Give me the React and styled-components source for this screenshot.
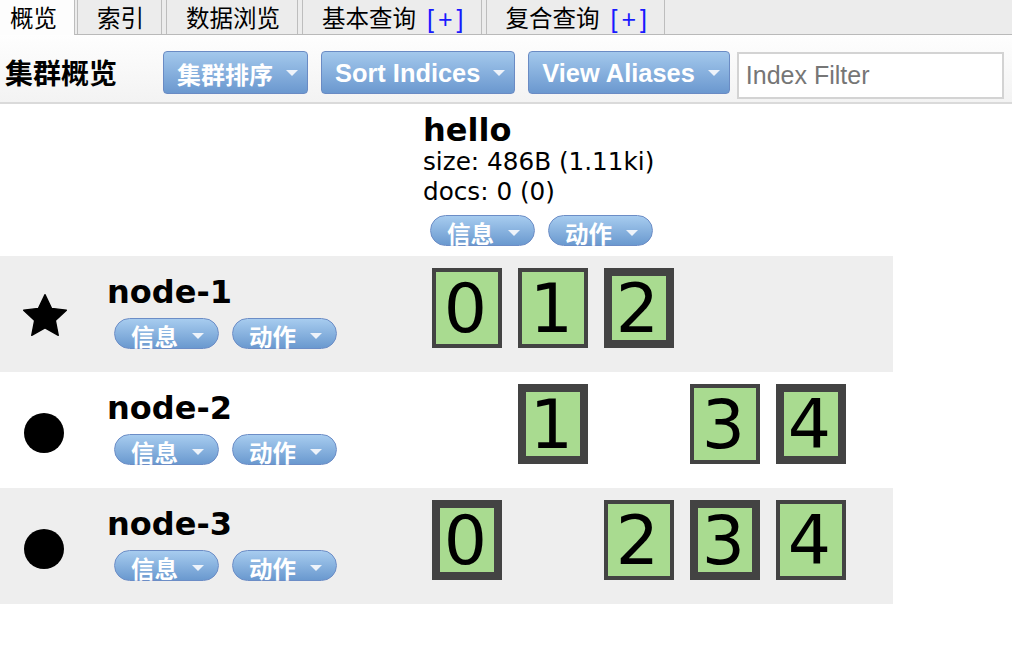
import React from "react";
import styled, { createGlobalStyle } from "styled-components";

const GlobalStyle = createGlobalStyle`
  html, body {
    margin: 0;
    padding: 0;
    background: #fff;
    color: #000;
    font-family: "DejaVu Sans", "Noto Sans CJK SC", sans-serif;
  }
  * { box-sizing: border-box; }
`;

const Page = styled.div`
  width: 1012px;
  min-height: 648px;
  background: #fff;
`;

/* ---------- tab bar ---------- */
const TabBar = styled.div`
  display: flex;
  height: 35px;
  background: #ececec;
  border-bottom: 1px solid #b9b9b9;
`;

const Tab = styled.div`
  display: flex;
  align-items: flex-start;
  padding: 4px 17px 0 ${(p) => (p.$first ? "10px" : "19px")};
  margin-right: ${(p) => (p.$first ? "2px" : "4px")};
  height: ${(p) => (p.$active ? "35px" : "34px")};
  line-height: 30px;
  font-size: 23.5px;
  font-family: "Liberation Sans", "Noto Sans CJK SC", sans-serif;
  background: ${(p) => (p.$active ? "#fdfdfd" : "#ececec")};
  border-left: ${(p) => (p.$first ? "none" : "1px solid #bdbdbd")};
  border-right: 1px solid #bdbdbd;
  white-space: nowrap;
`;

const Plus = styled.span`
  color: #1a1aff;
  margin-left: 11px;
  letter-spacing: 4px;
  margin-right: -4px;
  font-size: 25px;
`;

/* ---------- toolbar ---------- */
const Toolbar = styled.div`
  display: flex;
  align-items: flex-start;
  height: 69px;
  padding: 16px 0 0 5px;
  background: linear-gradient(#fefefe, #f3f3f3);
  border-bottom: 2px solid #dadada;
`;

const Title = styled.h1`
  margin: 5px 46px 0 0;
  font-size: 28px;
  line-height: 32px;
  font-weight: bold;
  font-family: "Noto Sans CJK SC", sans-serif;
`;

const ToolButtons = styled.div`
  display: flex;
  gap: 13px;
`;

const ToolButton = styled.button`
  display: flex;
  align-items: center;
  gap: 13px;
  height: 43px;
  padding: 1px 9px 0 13px;
  border: 1px solid #6a8bc4;
  border-radius: 4px;
  background: linear-gradient(#a3c8ec, #6b98cf);
  color: #fff;
  font-family: "Liberation Sans", "Noto Sans CJK SC", sans-serif;
  font-weight: bold;
  font-size: ${(p) => (p.$cjk ? "24px" : "25.4px")};
  cursor: pointer;
  white-space: nowrap;
`;

const Caret = styled.span`
  display: inline-block;
  width: 0;
  height: 0;
  border-left: 6px solid transparent;
  border-right: 6px solid transparent;
  border-top: 6px solid #eef3fa;
`;

const FilterInput = styled.input`
  margin: 1px 0 0 7px;
  width: 267px;
  height: 47px;
  border: 2px solid #d3d3d3;
  padding: 0 7px;
  font-family: "Liberation Sans", sans-serif;
  font-size: 25px;
  color: #222;
  background: #fff;
  outline: none;
  &::placeholder { color: #767676; }
`;

/* ---------- cluster table ---------- */
const Table = styled.div`
  width: 893px;
`;

const Row = styled.div`
  display: grid;
  grid-template-columns: 104px 316px 473px;
  height: ${(p) => (p.$header ? "auto" : "116px")};
  background: ${(p) => (p.$shaded ? "#eeeeee" : "#fff")};
`;

const IconCell = styled.div`
  position: relative;
`;

const StarIcon = styled.svg`
  display: block;
  margin: 33px 0 0 18px;
`;

const Dot = styled.span`
  display: block;
  width: 40px;
  height: 40px;
  border-radius: 50%;
  background: #000;
  margin: 41px 0 0 24px;
`;

const NodeCell = styled.div`
  padding: 19px 0 0 3px;
`;

const Heading = styled.div`
  font-size: 32px;
  line-height: 34px;
  font-weight: bold;
`;

const Stat = styled.div`
  font-size: 24.7px;
  line-height: 30px;
`;

const PillGroup = styled.div`
  display: flex;
  gap: 13px;
  margin: ${(p) => (p.$header ? "8px 0 0 7px" : "9px 0 0 7px")};
`;

const Pill = styled.button`
  display: inline-flex;
  align-items: center;
  gap: 14px;
  height: 31px;
  padding: 4px 14px 0 16px;
  border: 1px solid #6c8dc6;
  border-radius: 16px;
  background: linear-gradient(#a7ccef, #6a99cf);
  color: #fff;
  font-family: "Noto Sans CJK SC", sans-serif;
  font-weight: bold;
  font-size: 23.5px;
  line-height: 26px;
  cursor: pointer;
`;

const IndexCell = styled.div`
  padding: ${(p) => (p.$header ? "9px 0 10px 3px" : "12px 0 0 3px")};
`;

const ShardList = styled.div`
  display: flex;
  gap: 16px;
  margin-left: 9px;
`;

const Slot = styled.div`
  width: 70px;
  height: 80px;
`;

const Shard = styled.div`
  width: 70px;
  height: 80px;
  display: flex;
  align-items: center;
  justify-content: center;
  padding: 2px 3px 0 0;
  background: #a9db90;
  border: ${(p) => (p.$primary ? "8px" : "4px")} solid #434343;
  font-family: "DejaVu Sans", sans-serif;
  font-size: 68px;
  line-height: 1;
  color: #000;
`;

const tabs = [
  { label: "概览", active: true },
  { label: "索引" },
  { label: "数据浏览" },
  { label: "基本查询", plus: true },
  { label: "复合查询", plus: true },
];

const nodes = [
  { name: "node-1", master: true, shards: ["r", "r", "p", null, null] },
  { name: "node-2", shards: [null, "p", null, "r", "p"] },
  { name: "node-3", shards: ["p", null, "r", "p", "r"] },
];

function Star() {
  return (
    <StarIcon width="54" height="54" viewBox="0 0 24 24">
      <path
        d="M12 2.5l2.9 6.1 6.6.8-4.9 4.6 1.3 6.6L12 17.3l-5.9 3.3 1.3-6.6-4.9-4.6 6.6-.8z"
        fill="#000"
        stroke="#000"
        strokeWidth="0.6"
        strokeLinejoin="round"
      />
    </StarIcon>
  );
}

function Pills({ header }) {
  return (
    <PillGroup $header={header}>
      <Pill>
        信息 <Caret />
      </Pill>
      <Pill>
        动作 <Caret />
      </Pill>
    </PillGroup>
  );
}

export default function App() {
  return (
    <Page>
      <GlobalStyle />
      <TabBar>
        {tabs.map((t, i) => (
          <Tab key={t.label} $active={t.active} $first={i === 0}>
            {t.label}
            {t.plus && <Plus>[+]</Plus>}
          </Tab>
        ))}
      </TabBar>
      <Toolbar>
        <Title>集群概览</Title>
        <ToolButtons>
          <ToolButton $cjk>
            集群排序 <Caret />
          </ToolButton>
          <ToolButton>
            Sort Indices <Caret />
          </ToolButton>
          <ToolButton>
            View Aliases <Caret />
          </ToolButton>
        </ToolButtons>
        <FilterInput placeholder="Index Filter" />
      </Toolbar>
      <Table>
        <Row $header>
          <div />
          <div />
          <IndexCell $header>
            <Heading>hello</Heading>
            <Stat>size: 486B (1.11ki)</Stat>
            <Stat>docs: 0 (0)</Stat>
            <Pills header />
          </IndexCell>
        </Row>
        {nodes.map((n, i) => (
          <Row key={n.name} $shaded={i % 2 === 0}>
            <IconCell>{n.master ? <Star /> : <Dot />}</IconCell>
            <NodeCell>
              <Heading>{n.name}</Heading>
              <Pills />
            </NodeCell>
            <IndexCell>
              <ShardList>
                {n.shards.map((s, k) =>
                  s ? (
                    <Shard key={k} $primary={s === "p"}>
                      {k}
                    </Shard>
                  ) : (
                    <Slot key={k} />
                  )
                )}
              </ShardList>
            </IndexCell>
          </Row>
        ))}
      </Table>
    </Page>
  );
}
